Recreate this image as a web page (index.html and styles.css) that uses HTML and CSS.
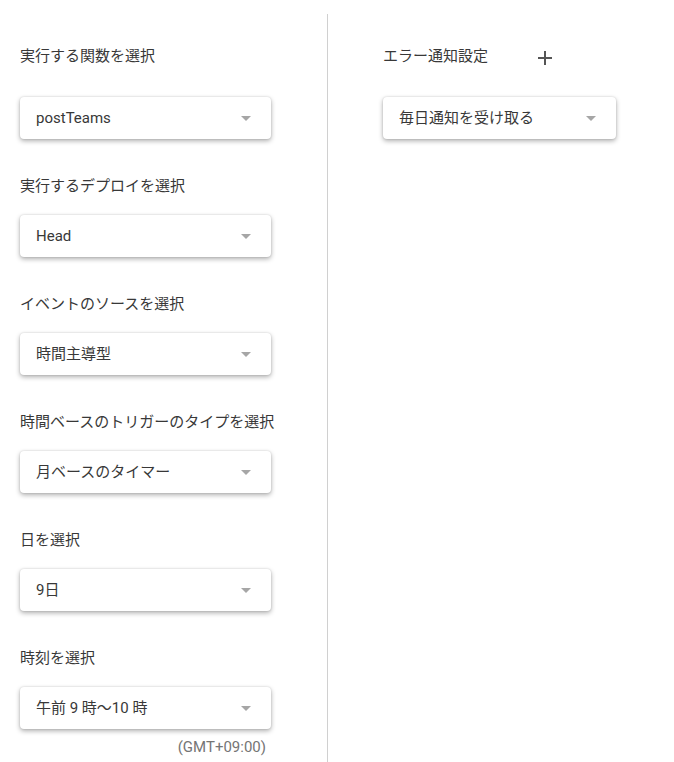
FILE: index.html
```html
<!DOCTYPE html>
<html lang="ja">
<head>
<meta charset="utf-8">
<link rel="stylesheet" href="styles.css">
</head>
<body>
<div class="page">
  <div class="col-left">
    <div class="field first">
      <div class="label">実行する関数を選択</div>
      <div class="select"><span>postTeams</span><span class="arrow"></span></div>
    </div>
    <div class="field">
      <div class="label">実行するデプロイを選択</div>
      <div class="select"><span>Head</span><span class="arrow"></span></div>
    </div>
    <div class="field">
      <div class="label">イベントのソースを選択</div>
      <div class="select"><span>時間主導型</span><span class="arrow"></span></div>
    </div>
    <div class="field">
      <div class="label">時間ベースのトリガーのタイプを選択</div>
      <div class="select"><span>月ベースのタイマー</span><span class="arrow"></span></div>
    </div>
    <div class="field">
      <div class="label">日を選択</div>
      <div class="select"><span>9日</span><span class="arrow"></span></div>
    </div>
    <div class="field">
      <div class="label">時刻を選択</div>
      <div class="select"><span>午前 9 時～10 時</span><span class="arrow"></span></div>
      <div class="tz">(GMT+09:00)</div>
    </div>
  </div>
  <div class="col-right">
    <div class="field first">
      <div class="label-row">
        <div class="label">エラー通知設定</div>
        <span class="plus"></span>
      </div>
      <div class="select narrow"><span>毎日通知を受け取る</span><span class="arrow"></span></div>
    </div>
  </div>
</div>
</body>
</html>
```
FILE: styles.css
```css
html, body {
  margin: 0;
  padding: 0;
  background: #fff;
}
body {
  font-family: Roboto, "Noto Sans CJK JP", sans-serif;
  font-size: 15px;
  color: #333;
}
.page {
  display: flex;
  margin-top: 14px;
  height: 748px;
}
.col-left {
  width: 307px;
  padding-left: 20px;
  padding-top: 32px;
  border-right: 1px solid #d0d0d0;
  box-sizing: content-box;
}
.col-right {
  padding-left: 55px;
  padding-top: 32px;
}
.field {
  display: flex;
  flex-direction: column;
  margin-bottom: 37px;
}
.label {
  line-height: 20px;
  height: 20px;
  margin-bottom: 19px;
  color: #383838;
  white-space: nowrap;
}
.field.first .label {
  margin-bottom: 31px;
}
.label-row {
  display: flex;
  align-items: center;
  margin-bottom: 31px;
}
.field.first .label-row .label {
  margin-bottom: 0;
}
.plus {
  position: relative;
  width: 14px;
  height: 14px;
  margin-left: 50px;
  margin-top: 4px;
}
.plus::before,
.plus::after {
  content: "";
  position: absolute;
  background: #555;
}
.plus::before {
  left: 0;
  top: 6px;
  width: 14px;
  height: 2px;
}
.plus::after {
  left: 6px;
  top: 0;
  width: 2px;
  height: 14px;
}
.select {
  width: 251px;
  height: 42px;
  box-sizing: border-box;
  padding: 0 20px 0 16px;
  display: flex;
  align-items: center;
  justify-content: space-between;
  background: #fff;
  border-radius: 4px;
  box-shadow: 0 2px 5px rgba(0, 0, 0, 0.32), 0 0 2px rgba(0, 0, 0, 0.14);
  color: #383838;
  line-height: 20px;
}
.select.narrow {
  width: 233px;
}
.arrow {
  width: 0;
  height: 0;
  border-left: 5.5px solid transparent;
  border-right: 5.5px solid transparent;
  border-top: 5.5px solid #a6a6a6;
}
.tz {
  width: 246px;
  margin-top: 8px;
  text-align: right;
  font-size: 15px;
  line-height: 20px;
  color: #757575;
}
```
